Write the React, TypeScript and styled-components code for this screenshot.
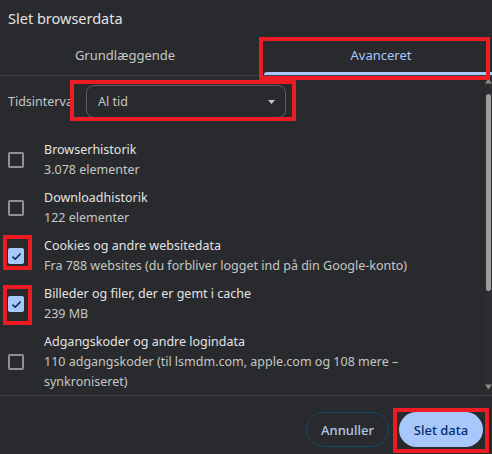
import React from "react";
import styled, { createGlobalStyle } from "styled-components";

const Global = createGlobalStyle`
  html, body { margin: 0; padding: 0; background: #292a2d; }
  body { font-family: "Noto Sans", "Open Sans", sans-serif; }
  * { box-sizing: border-box; }
`;

const Dialog = styled.div`
  width: 492px;
  height: 454px;
  background: #292a2d;
  display: flex;
  flex-direction: column;
  overflow: hidden;
  color: #c4c7c5;
`;

const Title = styled.div`
  height: 38px;
  padding-left: 8px;
  display: flex;
  align-items: center;
  padding-bottom: 2px;
  font-size: 14.5px;
  color: #e3e3e3;
`;

const Tabs = styled.div`
  height: 38px;
  display: flex;
  gap: 22px;
  padding-left: 8px;
  border-bottom: 1px solid #3f4043;
`;

const Tab = styled.div<{ $active?: boolean }>`
  position: relative;
  flex: 0 0 234px;
  height: 37px;
  display: flex;
  align-items: center;
  justify-content: center;
  padding-bottom: 3px;
  font-size: 13px;
  color: ${(p) => (p.$active ? "#a8c7fa" : "#c4c7c5")};
  &::after {
    content: "";
    display: ${(p) => (p.$active ? "block" : "none")};
    position: absolute;
    left: 0;
    right: 0;
    bottom: 0;
    height: 3px;
    border-radius: 3px 3px 0 0;
    background: #a8c7fa;
  }
`;

const Highlight = styled.span<{ $t: number; $r: number; $b: number; $l: number }>`
  position: absolute;
  top: ${(p) => -p.$t}px;
  right: ${(p) => -p.$r}px;
  bottom: ${(p) => -p.$b}px;
  left: ${(p) => -p.$l}px;
  border: 4px solid #ed1c24;
  pointer-events: none;
  z-index: 2;
`;

const Body = styled.div`
  height: 319px;
  display: flex;
`;

const Scroll = styled.div`
  flex: 1;
  padding-top: 9px;
  overflow: hidden;
`;

const TimeRow = styled.div`
  display: flex;
  align-items: center;
  padding-left: 8px;
  margin-bottom: 18px;
`;

const Label = styled.div`
  width: 65px;
  margin-right: 13px;
  overflow: hidden;
  white-space: nowrap;
  font-size: 12.5px;
  color: #c4c7c5;
`;

const Select = styled.div`
  position: relative;
  width: 200px;
  height: 33px;
  border: 1px solid #5c5d60;
  border-radius: 8px;
  display: flex;
  align-items: center;
  justify-content: space-between;
  padding: 0 10px 0 11px;
  font-size: 12.5px;
  color: #c4c7c5;
`;

const Item = styled.div`
  display: flex;
  align-items: center;
  padding: 4px 0;
`;

const BoxCell = styled.div`
  width: 44px;
  padding-left: 8px;
  display: flex;
  align-items: center;
`;

const Box = styled.div<{ $checked?: boolean }>`
  position: relative;
  width: 16px;
  height: 16px;
  border-radius: 2px;
  border: ${(p) => (p.$checked ? "none" : "2px solid #8f9193")};
  background: ${(p) => (p.$checked ? "#a8c7fa" : "transparent")};
  display: flex;
  align-items: center;
  justify-content: center;
`;

const Texts = styled.div`
  display: flex;
  flex-direction: column;
  font-size: 12.5px;
  line-height: 20px;
`;

const Main = styled.div`
  color: #e3e3e3;
`;

const Sub = styled.div`
  color: #c4c7c5;
  max-width: 400px;
`;

const Scrollbar = styled.div`
  width: 7px;
  display: flex;
  flex-direction: column;
  align-items: center;
  justify-content: space-between;
  padding: 2px 0 5px;
  background: #2c2d2f;
`;

const Thumb = styled.div`
  width: 5px;
  height: 197px;
  border-radius: 3px;
  background: #9c9c9c;
  margin-top: 10px;
  margin-bottom: auto;
`;

const Footer = styled.div`
  flex: 1;
  border-top: 1px solid #3f4043;
  display: flex;
  justify-content: flex-end;
  align-items: flex-start;
  gap: 10px;
  padding: 16px 9px 0 0;
`;

const Button = styled.button<{ $primary?: boolean }>`
  position: relative;
  height: 35px;
  width: ${(p) => (p.$primary ? 84 : 83)}px;
  border-radius: 18px;
  font-family: inherit;
  font-size: 13px;
  font-weight: 500;
  border: ${(p) => (p.$primary ? "none" : "1px solid #134867")};
  background: ${(p) => (p.$primary ? "#a8c7fa" : "transparent")};
  color: ${(p) => (p.$primary ? "#062e6f" : "#b3c8e6")};
  padding: 0;
`;

const Caret = () => (
  <svg width="7" height="4" viewBox="0 0 7 4">
    <path d="M0 0 L7 0 L3.5 4 Z" fill="#c4c7c5" />
  </svg>
);

const Check = () => (
  <svg width="11" height="9" viewBox="0 0 12 10">
    <path d="M1.5 5.2 L4.5 8 L10.5 1.8" stroke="#062e6f" strokeWidth="1.8" fill="none" />
  </svg>
);

const Arrow = ({ up }: { up?: boolean }) => (
  <svg width="7" height="6" viewBox="0 0 7 6">
    <path d={up ? "M3.5 0.5 L7 5.5 L0 5.5 Z" : "M0 0.5 L7 0.5 L3.5 5.5 Z"} fill="#8a8a8a" />
  </svg>
);

type Hl = { t: number; r: number; b: number; l: number };

const items: { main: string; sub: string[]; checked?: boolean; hl?: Hl }[] = [
  { main: "Browserhistorik", sub: ["3.078 elementer"] },
  { main: "Downloadhistorik", sub: ["122 elementer"] },
  {
    main: "Cookies og andre websitedata",
    sub: ["Fra 788 websites (du forbliver logget ind på din Google-konto)"],
    checked: true,
    hl: { t: 13, r: 8, b: 6, l: 5 },
  },
  {
    main: "Billeder og filer, der er gemt i cache",
    sub: ["239 MB"],
    checked: true,
    hl: { t: 11, r: 8, b: 13, l: 5 },
  },
  {
    main: "Adgangskoder og andre logindata",
    sub: ["110 adgangskoder (til lsmdm.com, apple.com og 108 mere –", "synkroniseret)"],
  },
];

export default function App() {
  return (
    <Dialog>
      <Global />
      <Title>Slet browserdata</Title>
      <Tabs>
        <Tab>Grundlæggende</Tab>
        <Tab $active>
          Avanceret
          <Highlight $t={1} $r={-8} $b={5} $l={5} />
        </Tab>
      </Tabs>
      <Body>
        <Scroll>
          <TimeRow>
            <Label>Tidsinterval</Label>
            <Select>
              <span>Al tid</span>
              <Caret />
              <Highlight $t={6} $r={11} $b={4} $l={17} />
            </Select>
          </TimeRow>
          {items.map((it) => (
            <Item key={it.main}>
              <BoxCell>
                <Box $checked={it.checked}>
                  {it.checked && <Check />}
                  {it.hl && <Highlight $t={it.hl.t} $r={it.hl.r} $b={it.hl.b} $l={it.hl.l} />}
                </Box>
              </BoxCell>
              <Texts>
                <Main>{it.main}</Main>
                {it.sub.map((s) => (
                  <Sub key={s}>{s}</Sub>
                ))}
              </Texts>
            </Item>
          ))}
        </Scroll>
        <Scrollbar>
          <Arrow up />
          <Thumb />
          <Arrow />
        </Scrollbar>
      </Body>
      <Footer>
        <Button>Annuller</Button>
        <Button $primary>
          Slet data
          <Highlight $t={4} $r={6} $b={6} $l={6} />
        </Button>
      </Footer>
    </Dialog>
  );
}
